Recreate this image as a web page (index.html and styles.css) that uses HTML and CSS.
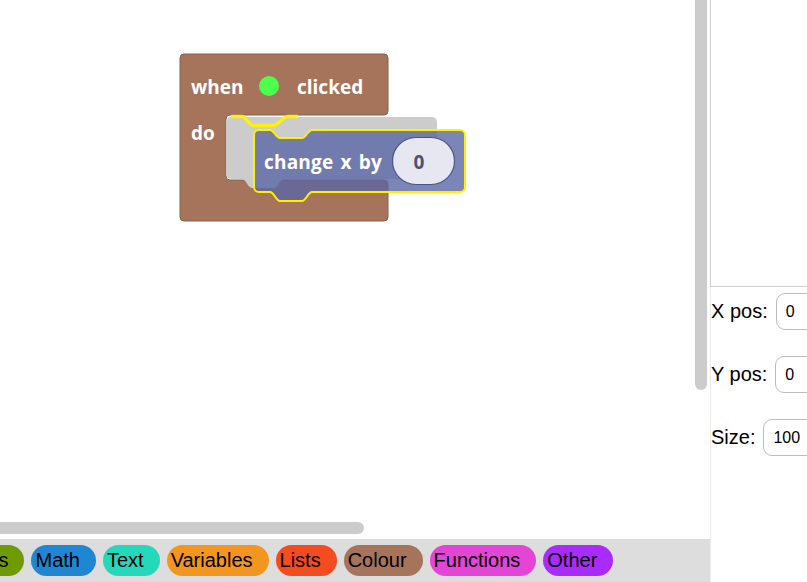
FILE: index.html
```html
<!DOCTYPE html>
<html>
<head>
<meta charset="utf-8">
<link rel="stylesheet" href="styles.css">
</head>
<body>
<div class="app">
  <div class="editor">
    <div class="workspace">
      <svg class="blocks" width="710" height="539" viewBox="0 0 710 539" xmlns="http://www.w3.org/2000/svg">
        <path class="event-block" d="M180,58 A4,4 0 0 1 184,54 H384 A4,4 0 0 1 388,58 V111 A4,4 0 0 1 384,115 H230 A4,4 0 0 0 226,119 V176 A4,4 0 0 0 230,180 H384 A4,4 0 0 1 388,184 V217 A4,4 0 0 1 384,221 H184 A4,4 0 0 1 180,217 Z"/>
        <text class="block-text" x="191" y="94">when</text>
        <circle cx="269" cy="86" r="10" fill="#4cff4c"/>
        <text class="block-text" x="297" y="94">clicked</text>
        <text class="block-text" x="191" y="140">do</text>
        <g transform="translate(226,117)">
          <path class="marker" d="M0,5 A5,5 0 0 1 5,0 H206 A5,5 0 0 1 211,5 V57 A5,5 0 0 1 206,62 H58 C54,62 52,71 48,71 H26 C22,71 20,62 16,62 H5 A5,5 0 0 1 0,57 Z"/>
        </g>
        <path class="conn-highlight" d="M231,116.5 H242 C246,116.5 249,125.5 254,125.5 H273 C278,125.5 283,116.5 288,116.5 H298"/>
        <g transform="translate(254,130)">
          <path class="motion-block" d="M0,5 A5,5 0 0 1 5,0 H16 C20,0 22,8 26,8 H48 C52,8 54,0 58,0 H206 A5,5 0 0 1 211,5 V57 A5,5 0 0 1 206,62 H58 C54,62 52,71 48,71 H26 C22,71 20,62 16,62 H5 A5,5 0 0 1 0,57 Z"/>
          <path class="drag-outline" d="M0,5 A5,5 0 0 1 5,0 H16 C20,0 22,8 26,8 H48 C52,8 54,0 58,0 H206 A5,5 0 0 1 211,5 V57 A5,5 0 0 1 206,62 H58 C54,62 52,71 48,71 H26 C22,71 20,62 16,62 H5 A5,5 0 0 1 0,57 Z"/>
          <text class="block-text wide" x="10" y="39">change x by</text>
          <rect class="num-field" x="138.5" y="7.5" width="62" height="47" rx="23.5" ry="23.5"/>
          <text class="num-text" x="165" y="39" text-anchor="middle">0</text>
        </g>
      </svg>
      <div class="vscroll"></div>
      <div class="hscroll"></div>
    </div>
    <div class="toolbar">
      <div class="categories">
        <button class="cat cat-controls">Controls</button>
        <button class="cat cat-math">Math</button>
        <button class="cat cat-text">Text</button>
        <button class="cat cat-vars">Variables</button>
        <button class="cat cat-lists">Lists</button>
        <button class="cat cat-colour">Colour</button>
        <button class="cat cat-funcs">Functions</button>
        <button class="cat cat-other">Other</button>
      </div>
    </div>
  </div>
  <div class="panel">
    <div class="stage"></div>
    <div class="props">
      <div class="prop"><label class="prop-label">X pos:</label><input class="prop-input" type="text" value="0"></div>
      <div class="prop"><label class="prop-label">Y pos:</label><input class="prop-input" type="text" value="0"></div>
      <div class="prop"><label class="prop-label">Size:</label><input class="prop-input" type="text" value="100"></div>
    </div>
  </div>
</div>
</body>
</html>
```

FILE: styles.css
```css
html, body {
  margin: 0;
  padding: 0;
  background: #ffffff;
}

.app {
  display: flex;
  width: 807px;
  height: 582px;
  overflow: hidden;
  font-family: "Liberation Sans", Arial, sans-serif;
}

.editor {
  width: 710px;
  flex: none;
  display: flex;
  flex-direction: column;
}

.workspace {
  position: relative;
  height: 539px;
  background: #ffffff;
  overflow: hidden;
}

.blocks {
  position: absolute;
  left: 0;
  top: 0;
  display: block;
}

.event-block {
  fill: #a5745b;
  stroke: #8a604b;
  stroke-width: 1;
}

.marker {
  fill: #cccccc;
}

.conn-highlight {
  fill: none;
  stroke: #fff200;
  stroke-width: 3.5;
}

.motion-block {
  fill: #5b67a5;
  opacity: 0.8;
}

.drag-outline {
  fill: none;
  stroke: #fff200;
  stroke-width: 2;
}

.block-text {
  font-family: "Open Sans", "Noto Sans", sans-serif;
  font-weight: 700;
  font-size: 19px;
  fill: #ffffff;
}

.block-text.wide {
  word-spacing: 2px;
  letter-spacing: 0.2px;
}

.num-field {
  fill: #e6e7f0;
  stroke: #4a5389;
  stroke-width: 1.2;
}

.num-text {
  font-family: "Open Sans", "Noto Sans", sans-serif;
  font-weight: 700;
  font-size: 19px;
  fill: #4b5373;
}

.vscroll {
  position: absolute;
  right: 3px;
  top: -6px;
  width: 12px;
  height: 396px;
  border-radius: 6px;
  background: #cccccc;
}

.hscroll {
  position: absolute;
  left: -6px;
  bottom: 5px;
  width: 370px;
  height: 12px;
  border-radius: 6px;
  background: #cccccc;
}

.toolbar {
  height: 43px;
  background: #dddddd;
  overflow: hidden;
}

.categories {
  display: flex;
  gap: 7px;
  padding-top: 6px;
  margin-left: -70px;
}

.cat {
  flex: none;
  height: 31px;
  border: none;
  border-radius: 16px;
  padding: 0 16px 0 4px;
  margin: 0;
  font-family: "Liberation Sans", Arial, sans-serif;
  font-size: 20px;
  line-height: 31px;
  color: #000000;
}

.cat-controls { background: #6f9b00; }
.cat-math { background: #1f86d3; }
.cat-text { background: #24d8bb; }
.cat-vars { background: #f3951f; }
.cat-lists { background: #f44b1f; }
.cat-colour { background: #a5745b; }
.cat-funcs { background: #e445d6; }
.cat-other { background: #aa2bff; }

.panel {
  flex: 1;
  overflow: hidden;
  display: flex;
  flex-direction: column;
}

.stage {
  flex: none;
  width: 480px;
  height: 286px;
  border-left: 1px solid #cfcfcf;
  border-bottom: 1px solid #cfcfcf;
  background: #ffffff;
}

.props {
  flex: 1;
  border-left: 1px solid #ececec;
  display: flex;
  flex-direction: column;
  gap: 26px;
  padding-top: 6px;
}

.prop {
  display: flex;
  align-items: center;
  gap: 8px;
  height: 37px;
  white-space: nowrap;
}

.prop-label {
  flex: none;
  font-size: 20px;
  color: #000000;
}

.prop-input {
  flex: none;
  box-sizing: border-box;
  width: 200px;
  height: 37px;
  border: 1px solid #bdbdbd;
  border-radius: 9px;
  padding: 0 9px;
  font-family: "Liberation Sans", Arial, sans-serif;
  font-size: 16px;
  color: #000000;
  background: #ffffff;
}
```
